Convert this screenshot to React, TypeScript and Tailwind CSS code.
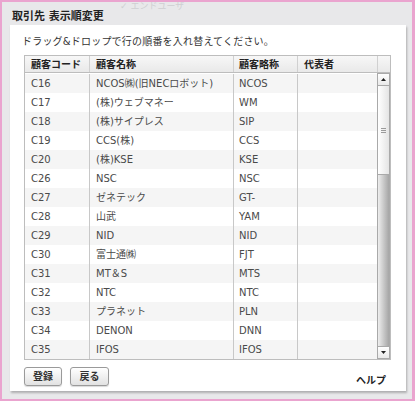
import { CSSProperties } from 'react';

const rows: [string, string, string][] = [
  ['C16', 'NCOS㈱(旧NECロボット)', 'NCOS'],
  ['C17', '(株)ウェブマネー', 'WM'],
  ['C18', '(株)サイプレス', 'SIP'],
  ['C19', 'CCS(株)', 'CCS'],
  ['C20', '(株)KSE', 'KSE'],
  ['C26', 'NSC', 'NSC'],
  ['C27', 'ゼネテック', 'GT-'],
  ['C28', '山武', 'YAM'],
  ['C29', 'NID', 'NID'],
  ['C30', '富士通㈱', 'FJT'],
  ['C31', 'MT＆S', 'MTS'],
  ['C32', 'NTC', 'NTC'],
  ['C33', 'プラネット', 'PLN'],
  ['C34', 'DENON', 'DNN'],
  ['C35', 'IFOS', 'IFOS'],
];

const font: CSSProperties = {
  fontFamily: '"DejaVu Sans", "Noto Sans CJK JP", sans-serif',
};

function Arrow({ up }: { up?: boolean }) {
  return (
    <div className="flex h-[13px] items-center justify-center border border-[#a9a9a9] bg-gradient-to-b from-white to-[#e9e9e9]">
      <svg width="5" height="3" viewBox="0 0 5 3">
        <path d={up ? 'M0 3 L2.5 0 L5 3 Z' : 'M0 0 L2.5 3 L5 0 Z'} fill="#222" />
      </svg>
    </div>
  );
}

function Scrollbar() {
  return (
    <div className="flex w-[13px] flex-col bg-white">
      <Arrow up />
      <div className="flex h-[89px] items-center justify-center border-x border-b border-[#a9a9a9] bg-gradient-to-r from-white to-[#e4e4e4]">
        <div className="flex flex-col gap-[1px]">
          <div className="h-px w-[5px] bg-[#9a9a9a]" />
          <div className="h-px w-[5px] bg-[#9a9a9a]" />
          <div className="h-px w-[5px] bg-[#9a9a9a]" />
        </div>
      </div>
      <div className="flex-1 border-x border-[#a9a9a9] bg-gradient-to-r from-[#eeeeee] to-[#a6a6a6]" />
      <Arrow />
    </div>
  );
}

export default function App() {
  return (
    <div
      className="relative h-[401px] w-[415px] overflow-hidden border-y-2 border-l-2 border-r-[3px] border-[#eaa4cf] bg-[#e8e8ea] text-[#333]"
      style={font}
    >
      <div className="pointer-events-none absolute left-[118px] top-[-2px] text-[9px] text-[#cfcfd2]">
        ✓ エンドユーザ
      </div>
      <div className="relative h-[23px] pl-[10px] pt-[7px] text-[11px] font-bold text-[#222]">
        取引先 表示順変更
      </div>
      <div className="ml-[8px] mr-[6px] h-[366px] bg-white pl-[14px] pr-[15px] pt-[9px] shadow-[1px_2px_2px_rgba(0,0,0,0.25)]">
        <div className="ml-[-2px] h-[21px] text-[10px] tracking-[0.2px] text-[#333]">
          ドラッグ&amp;ドロップで行の順番を入れ替えてください。
        </div>
        <div className="flex w-[367px] flex-col border border-[#bdbdbd]">
          <div className="grid h-[17px] grid-cols-[65px_144px_64px_80px_1fr] border-b border-[#bdbdbd] bg-gradient-to-b from-[#f7f7f7] to-[#e9e9e9] text-[10px] font-bold text-[#222]">
            <div className="flex items-center border-r border-[#d0d0d0] pl-[6px]">顧客コード</div>
            <div className="flex items-center border-r border-[#d0d0d0] pl-[6px]">顧客名称</div>
            <div className="flex items-center border-r border-[#d0d0d0] pl-[5px]">顧客略称</div>
            <div className="flex items-center border-r border-[#d0d0d0] pl-[6px]">代表者</div>
            <div />
          </div>
          <div className="flex">
            <div className="flex w-[352px] flex-col pt-px">
              {rows.map(([code, name, abbr], i) => (
                <div
                  key={code}
                  className={`grid h-[19px] grid-cols-[65px_144px_64px_79px] text-[10px] text-[#4a4a4a] ${
                    i % 2 === 0 ? 'bg-[#f5f5f5]' : 'bg-white'
                  }`}
                >
                  <div className="flex items-center border-r border-[#c8c8c8] pl-[6px]">{code}</div>
                  <div className="flex items-center border-r border-[#c8c8c8] pl-[6px]">{name}</div>
                  <div className="flex items-center border-r border-[#c8c8c8] pl-[5px]">{abbr}</div>
                  <div />
                </div>
              ))}
            </div>
            <Scrollbar />
          </div>
        </div>
        <div className="mt-[5px] flex items-center">
          <button className="h-[19px] w-[38px] rounded-[3px] border border-[#9a9a9a] bg-gradient-to-b from-white to-[#e2e2e2] text-[10px] font-bold text-[#333] shadow-[0_1px_1px_rgba(0,0,0,0.15)]">
            登録
          </button>
          <button className="ml-[8px] h-[19px] w-[39px] rounded-[3px] border border-[#9a9a9a] bg-gradient-to-b from-white to-[#e2e2e2] text-[10px] font-bold text-[#333] shadow-[0_1px_1px_rgba(0,0,0,0.15)]">
            戻る
          </button>
          <div className="ml-auto mr-[5px] mt-[8px] text-[10px] font-bold text-[#222]">ヘルプ</div>
        </div>
      </div>
    </div>
  );
}
